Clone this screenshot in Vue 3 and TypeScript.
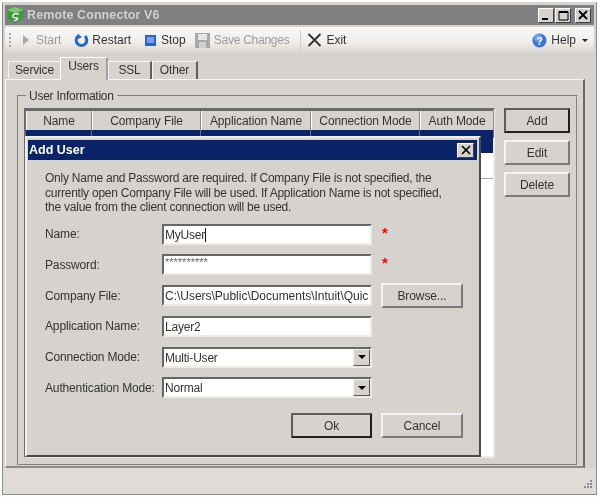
<script setup lang="ts">
const tabs = [
  { label: 'Service', w: 52, active: false },
  { label: 'Users', w: 48, active: true },
  { label: 'SSL', w: 44, active: false },
  { label: 'Other', w: 46, active: false },
]
const columns = [
  { label: 'Name', w: 66 },
  { label: 'Company File', w: 109 },
  { label: 'Application Name', w: 110 },
  { label: 'Connection Mode', w: 109 },
  { label: 'Auth Mode', w: 74 },
]
</script>

<template>
  <div class="page">
    <div class="window">
      <header class="titlebar">
        <svg class="app-icon" width="19" height="18" viewBox="0 0 19 18">
          <path d="M1 4 L9 1 L18 4 L17 13 L9 17 L2 13 Z" fill="#3f9a3c" />
          <path d="M1 4 L9 7 L18 4 L9 1 Z" fill="#7cc872" />
          <path d="M9 7 L9 17" stroke="#1f6a22" stroke-width="1" />
          <path d="M13 8 Q7 7 7 10 Q7 12 11 12 Q13 13 8 15" stroke="#e8f5e4" stroke-width="1.6" fill="none" />
        </svg>
        <span class="app-title">Remote Connector V6</span>
        <div class="win-btns">
          <button class="win-btn"><svg width="10" height="10" viewBox="0 0 10 10"><rect x="1" y="8" width="6" height="2" fill="#000" /></svg></button>
          <button class="win-btn"><svg width="11" height="11" viewBox="0 0 11 11"><path d="M1 2.5H10M1 1.5H10V10H1Z" fill="none" stroke="#000" /></svg></button>
          <button class="win-btn close"><svg width="10" height="10" viewBox="0 0 10 10"><path d="M1 1L9 9M9 1L1 9" stroke="#000" stroke-width="1.8" /></svg></button>
        </div>
      </header>

      <nav class="toolbar">
        <span class="grip"></span>
        <span class="tool disabled start">
          <svg width="8" height="12" viewBox="0 0 8 12"><path d="M1 1L7 6L1 11Z" fill="#a9a9a9" /></svg>
          Start
        </span>
        <span class="tool restart">
          <svg width="15" height="15" viewBox="0 0 15 15">
            <path d="M4 3.2A5.3 5.3 0 1 0 11 3.2" fill="none" stroke="#2468c8" stroke-width="3" />
            <path d="M6.5 0.5V6.5L2 3Z" fill="#2468c8" transform="rotate(180 5 3.5)" />
          </svg>
          Restart
        </span>
        <span class="tool stop">
          <svg width="11" height="11" viewBox="0 0 11 11"><rect width="11" height="11" fill="#2a62c6" /><rect x="2" y="2" width="7" height="6" fill="#6fa3e6" /></svg>
          Stop
        </span>
        <span class="tool disabled save">
          <svg width="15" height="15" viewBox="0 0 15 15"><rect width="15" height="15" fill="#a8a8a8" /><rect x="3" y="1" width="9" height="6" fill="#e4e4e4" /><rect x="4" y="9" width="7" height="6" fill="#d0d0d0" /></svg>
          Save Changes
        </span>
        <span class="tool-sep"></span>
        <span class="tool exit">
          <svg width="15" height="14" viewBox="0 0 15 14"><path d="M1.5 1L13.5 13M13.5 1L1.5 13" stroke="#303030" stroke-width="1.8" /></svg>
          Exit
        </span>
        <span class="tool help">
          <svg width="15" height="15" viewBox="0 0 15 15">
            <circle cx="7.5" cy="7.5" r="7" fill="#3a78d8" />
            <circle cx="6" cy="5" r="4" fill="#8db8f0" opacity="0.6" />
            <text x="7.5" y="11.5" text-anchor="middle" class="q">?</text>
          </svg>
          Help
          <span class="caret"></span>
        </span>
      </nav>

      <div class="tabs">
        <div
          v-for="t in tabs"
          :key="t.label"
          class="tab"
          :class="{ active: t.active }"
          :style="{ width: t.w + 'px' }"
        >{{ t.label }}</div>
      </div>

      <section class="panel">
        <fieldset class="group">
          <legend>User Information</legend>
          <div class="group-body">
            <div class="list">
              <div class="list-head">
                <div v-for="c in columns" :key="c.label" class="col" :style="{ width: c.w + 'px' }">{{ c.label }}</div>
              </div>
              <div class="list-sel">
                <span v-for="c in columns" :key="c.label" class="sel-cell" :style="{ width: c.w + 'px' }"></span>
              </div>
              <div class="list-line"></div>
            </div>
            <div class="side">
              <button class="btn default">Add</button>
              <button class="btn">Edit</button>
              <button class="btn">Delete</button>
            </div>
          </div>
        </fieldset>
      </section>

      <footer class="status">
        <svg class="sizer" width="12" height="12" viewBox="0 0 12 12" fill="#8a8a8a">
          <rect x="9" y="1" width="2" height="2" /><rect x="6" y="4" width="2" height="2" /><rect x="9" y="4" width="2" height="2" />
          <rect x="3" y="7" width="2" height="2" /><rect x="6" y="7" width="2" height="2" /><rect x="9" y="7" width="2" height="2" />
        </svg>
      </footer>

      <div class="dialog">
        <div class="dlg-title">
          <span>Add User</span>
          <button class="win-btn dlg-close"><svg width="10" height="10" viewBox="0 0 10 10"><path d="M1 1L9 9M9 1L1 9" stroke="#000" stroke-width="1.7" /></svg></button>
        </div>
        <p class="note">Only Name and Password are required. If Company File is not specified, the<br />currently open Company File will be used. If Application Name is not specified,<br />the value from the client connection will be used.</p>
        <div class="form">
          <label class="lab">Name:</label>
          <div class="field"><span class="caret-text">MyUser</span></div>
          <span class="req">*</span>

          <label class="lab">Password:</label>
          <div class="field pass">**********</div>
          <span class="req">*</span>

          <label class="lab">Company File:</label>
          <div class="field path">C:\Users\Public\Documents\Intuit\Quic</div>
          <button class="btn browse">Browse...</button>

          <label class="lab">Application Name:</label>
          <div class="field">Layer2</div>
          <span></span>

          <label class="lab">Connection Mode:</label>
          <div class="field combo">Multi-User<span class="drop"><i></i></span></div>
          <span></span>

          <label class="lab">Authentication Mode:</label>
          <div class="field combo">Normal<span class="drop"><i></i></span></div>
          <span></span>
        </div>
        <div class="dlg-actions">
          <button class="btn ok default">Ok</button>
          <button class="btn cancel">Cancel</button>
        </div>
      </div>
    </div>
  </div>
</template>

<style scoped>
.page {
  width: 600px;
  height: 498px;
  box-sizing: border-box;
  padding: 2px 3px 3px 2px;
  background: #fdfdfd;
  font-family: "Liberation Sans", Arial, sans-serif;
  font-size: 12px;
  color: #333;
  filter: blur(0.45px);
}
.window {
  position: relative;
  height: 100%;
  box-sizing: border-box;
  border: 1px solid #8c8c8c;
  border-top-color: #d8d6d2;
  background: #d6d3ce;
  display: flex;
  flex-direction: column;
}
.titlebar {
  height: 20px;
  margin: 2px 2px 0;
  background: #808080;
  display: flex;
  align-items: center;
  padding: 0 3px 0 1px;
}
.app-icon { flex: none; }
.app-title {
  margin-left: 2px;
  font-size: 12.5px;
  font-weight: bold;
  color: #d0d0d0;
  letter-spacing: 0.1px;
}
.win-btns { margin-left: auto; display: flex; }
.win-btn {
  width: 16px;
  height: 15px;
  padding: 0;
  margin-left: 1px;
  display: flex;
  align-items: center;
  justify-content: center;
  background: #d6d3ce;
  border: 1px solid;
  border-color: #fff #404040 #404040 #fff;
}
.win-btn.close { margin-left: 4px; }
.toolbar {
  height: 26px;
  margin: 2px 2px 0;
  display: flex;
  align-items: center;
  background: linear-gradient(#fbfaf9, #efecea 60%, #dad7d2);
  padding-left: 4px;
}
.grip {
  width: 2px;
  height: 15px;
  margin-right: 11px;
  background: repeating-linear-gradient(#a8a8a8 0 2px, transparent 2px 4px);
}
.tool { display: flex; align-items: center; white-space: nowrap; }
.tool.disabled { color: #9a9a9a; }
.start { gap: 6px; margin-right: 13px; }
.restart { gap: 3px; margin-right: 14px; }
.stop { gap: 5px; margin-right: 9px; }
.save { gap: 4px; letter-spacing: -0.25px; }
.tool-sep { width: 1px; height: 20px; background: #cfccc8; margin: 0 6px 0 11px; }
.exit { gap: 4px; }
.help { margin-left: auto; gap: 4px; margin-right: 6px; }
.q { fill: #fff; font-size: 11px; font-weight: bold; font-family: "Liberation Sans", sans-serif; }
.caret {
  width: 0;
  height: 0;
  margin-left: 2px;
  border: 3px solid transparent;
  border-top: 3px solid #222;
  border-bottom: 0;
}
.tabs {
  height: 23px;
  margin-top: 3px;
  padding-left: 5px;
  display: flex;
  align-items: flex-end;
  position: relative;
  z-index: 1;
  letter-spacing: -0.15px;
}
.tab {
  height: 18px;
  box-sizing: border-box;
  border-top: 1px solid #f6f5f3;
  border-left: 1px solid #f6f5f3;
  border-right: 2px solid #5e5e5e;
  text-align: center;
  line-height: 17px;
}
.tab:first-child { border-right: 0; }
.tab.active {
  height: 23px;
  line-height: 17px;
  margin-bottom: -1px;
  background: #d6d3ce;
  border-left-color: #fff;
  border-top-color: #fff;
  border-right: 2px solid #a0a0a0;
}
.panel {
  flex: 1;
  margin: 0 11px 0 2px;
  box-sizing: border-box;
  border: 1px solid;
  border-width: 1px 2px 2px 1px;
  border-color: #f8f7f5 #6a6a6a #8a8a8a #f8f7f5;
  padding: 9px 5px 0 11px;
  display: flex;
}
.group {
  flex: 1;
  margin: 0;
  min-width: 0;
  padding: 5px 5px 0 5px;
  border: 2px groove #d6d3ce;
  display: flex;
}
.group legend {
  margin-left: 2px;
  padding: 0 3px;
  line-height: 14px;
  letter-spacing: -0.25px;
}
.group-body { display: flex; flex: 1; gap: 9px; height: 100%; }
.list {
  width: 471px;
  height: 350px;
  box-sizing: border-box;
  background: #fff;
  border: 2px solid;
  border-top-width: 3px;
  border-color: #6a6a6a #eeece9 #eeece9 #6a6a6a;
  display: flex;
  flex-direction: column;
  letter-spacing: -0.12px;
}
.list-head { display: flex; height: 19px; }
.col {
  box-sizing: border-box;
  flex: none;
  background: #d6d3ce;
  border-right: 1px solid #8a8a8a;
  border-left: 1px solid #fff;
  text-align: center;
  line-height: 20px;
  white-space: nowrap;
  overflow: hidden;
}
.list-sel { display: flex; height: 23px; background: #0a246a; }
.sel-cell { box-sizing: border-box; border-right: 1px solid #5d6f9f; flex: none; height: 8px; }
.list-line { height: 1px; margin-top: 25px; background: #a8a8a8; }
.side { display: flex; flex-direction: column; gap: 7px; width: 66px; }
.btn {
  box-sizing: border-box;
  height: 25px;
  padding: 0;
  background: #d6d3ce;
  font: inherit;
  letter-spacing: -0.1px;
  color: #333;
  border: 2px solid;
  border-color: #f4f3f1 #7a7a7a #7a7a7a #f4f3f1;
}
.btn.default {
  border: 2px solid #2c2c2c;
  border-color: #5c5c5c #202020 #202020 #5c5c5c;
}
.status {
  height: 26px;
  background: #dfdbd6;
  position: relative;
}
.sizer { position: absolute; right: 3px; bottom: 3px; }

.dialog {
  position: absolute;
  left: 22px;
  top: 133px;
  width: 456px;
  height: 321px;
  box-sizing: border-box;
  background: #d6d3ce;
  border: 2px solid;
  border-color: #f0eeec #4a4a4a #4a4a4a #f0eeec;
  padding: 2px 0 0 1px;
}
.dlg-title {
  height: 20px;
  background: #0a246a;
  margin-right: 2px;
  color: #fff;
  font-weight: bold;
  font-size: 12.5px;
  padding: 0 3px 0 1px;
  display: flex;
  align-items: center;
  justify-content: space-between;
}
.dlg-close { width: 17px; height: 15px; }
.note {
  margin: 11px 0 0 17px;
  line-height: 14.5px;
  white-space: nowrap;
  letter-spacing: -0.24px;
}
.form {
  margin: 9px 0 0 17px;
  display: grid;
  grid-template-columns: 117px 210px auto;
  grid-auto-rows: 21px;
  row-gap: 9.8px;
  align-items: center;
}
.lab { white-space: nowrap; letter-spacing: -0.15px; }
.field {
  box-sizing: border-box;
  height: 21px;
  width: 210px;
  background: #fff;
  border: 2px solid;
  border-color: #666 #ecebe8 #ecebe8 #666;
  padding: 1px 0 0 1px;
  line-height: 17px;
  white-space: nowrap;
  overflow: hidden;
  position: relative;
  letter-spacing: -0.2px;
}
.caret-text { border-right: 1px solid #111; }
.pass { font-size: 11px; line-height: 12px; color: #666; padding-top: 0; letter-spacing: 0; }
.path { letter-spacing: -0.02px; }
.req {
  margin: 1px 0 0 10px;
  color: #f00;
  font-weight: bold;
  font-size: 15px;
  line-height: 15px;
  height: 12px;
  align-self: start;
}
.browse { margin-left: 9px; width: 82px; height: 25px; }
.combo { padding-right: 18px; }
.drop {
  position: absolute;
  top: 0;
  right: 0;
  width: 17px;
  height: 17px;
  box-sizing: border-box;
  background: #d6d3ce;
  border: 1px solid;
  border-color: #f4f3f1 #555 #555 #f4f3f1;
  display: flex;
  align-items: center;
  justify-content: center;
}
.drop i {
  width: 0;
  height: 0;
  border: 4px solid transparent;
  border-top: 4px solid #000;
  border-bottom: 0;
}
.dlg-actions {
  margin: 15px 0 0 263px;
  display: flex;
  gap: 9px;
}
.ok { width: 81px; height: 25px; }
.cancel { width: 82px; height: 25px; }
</style>
